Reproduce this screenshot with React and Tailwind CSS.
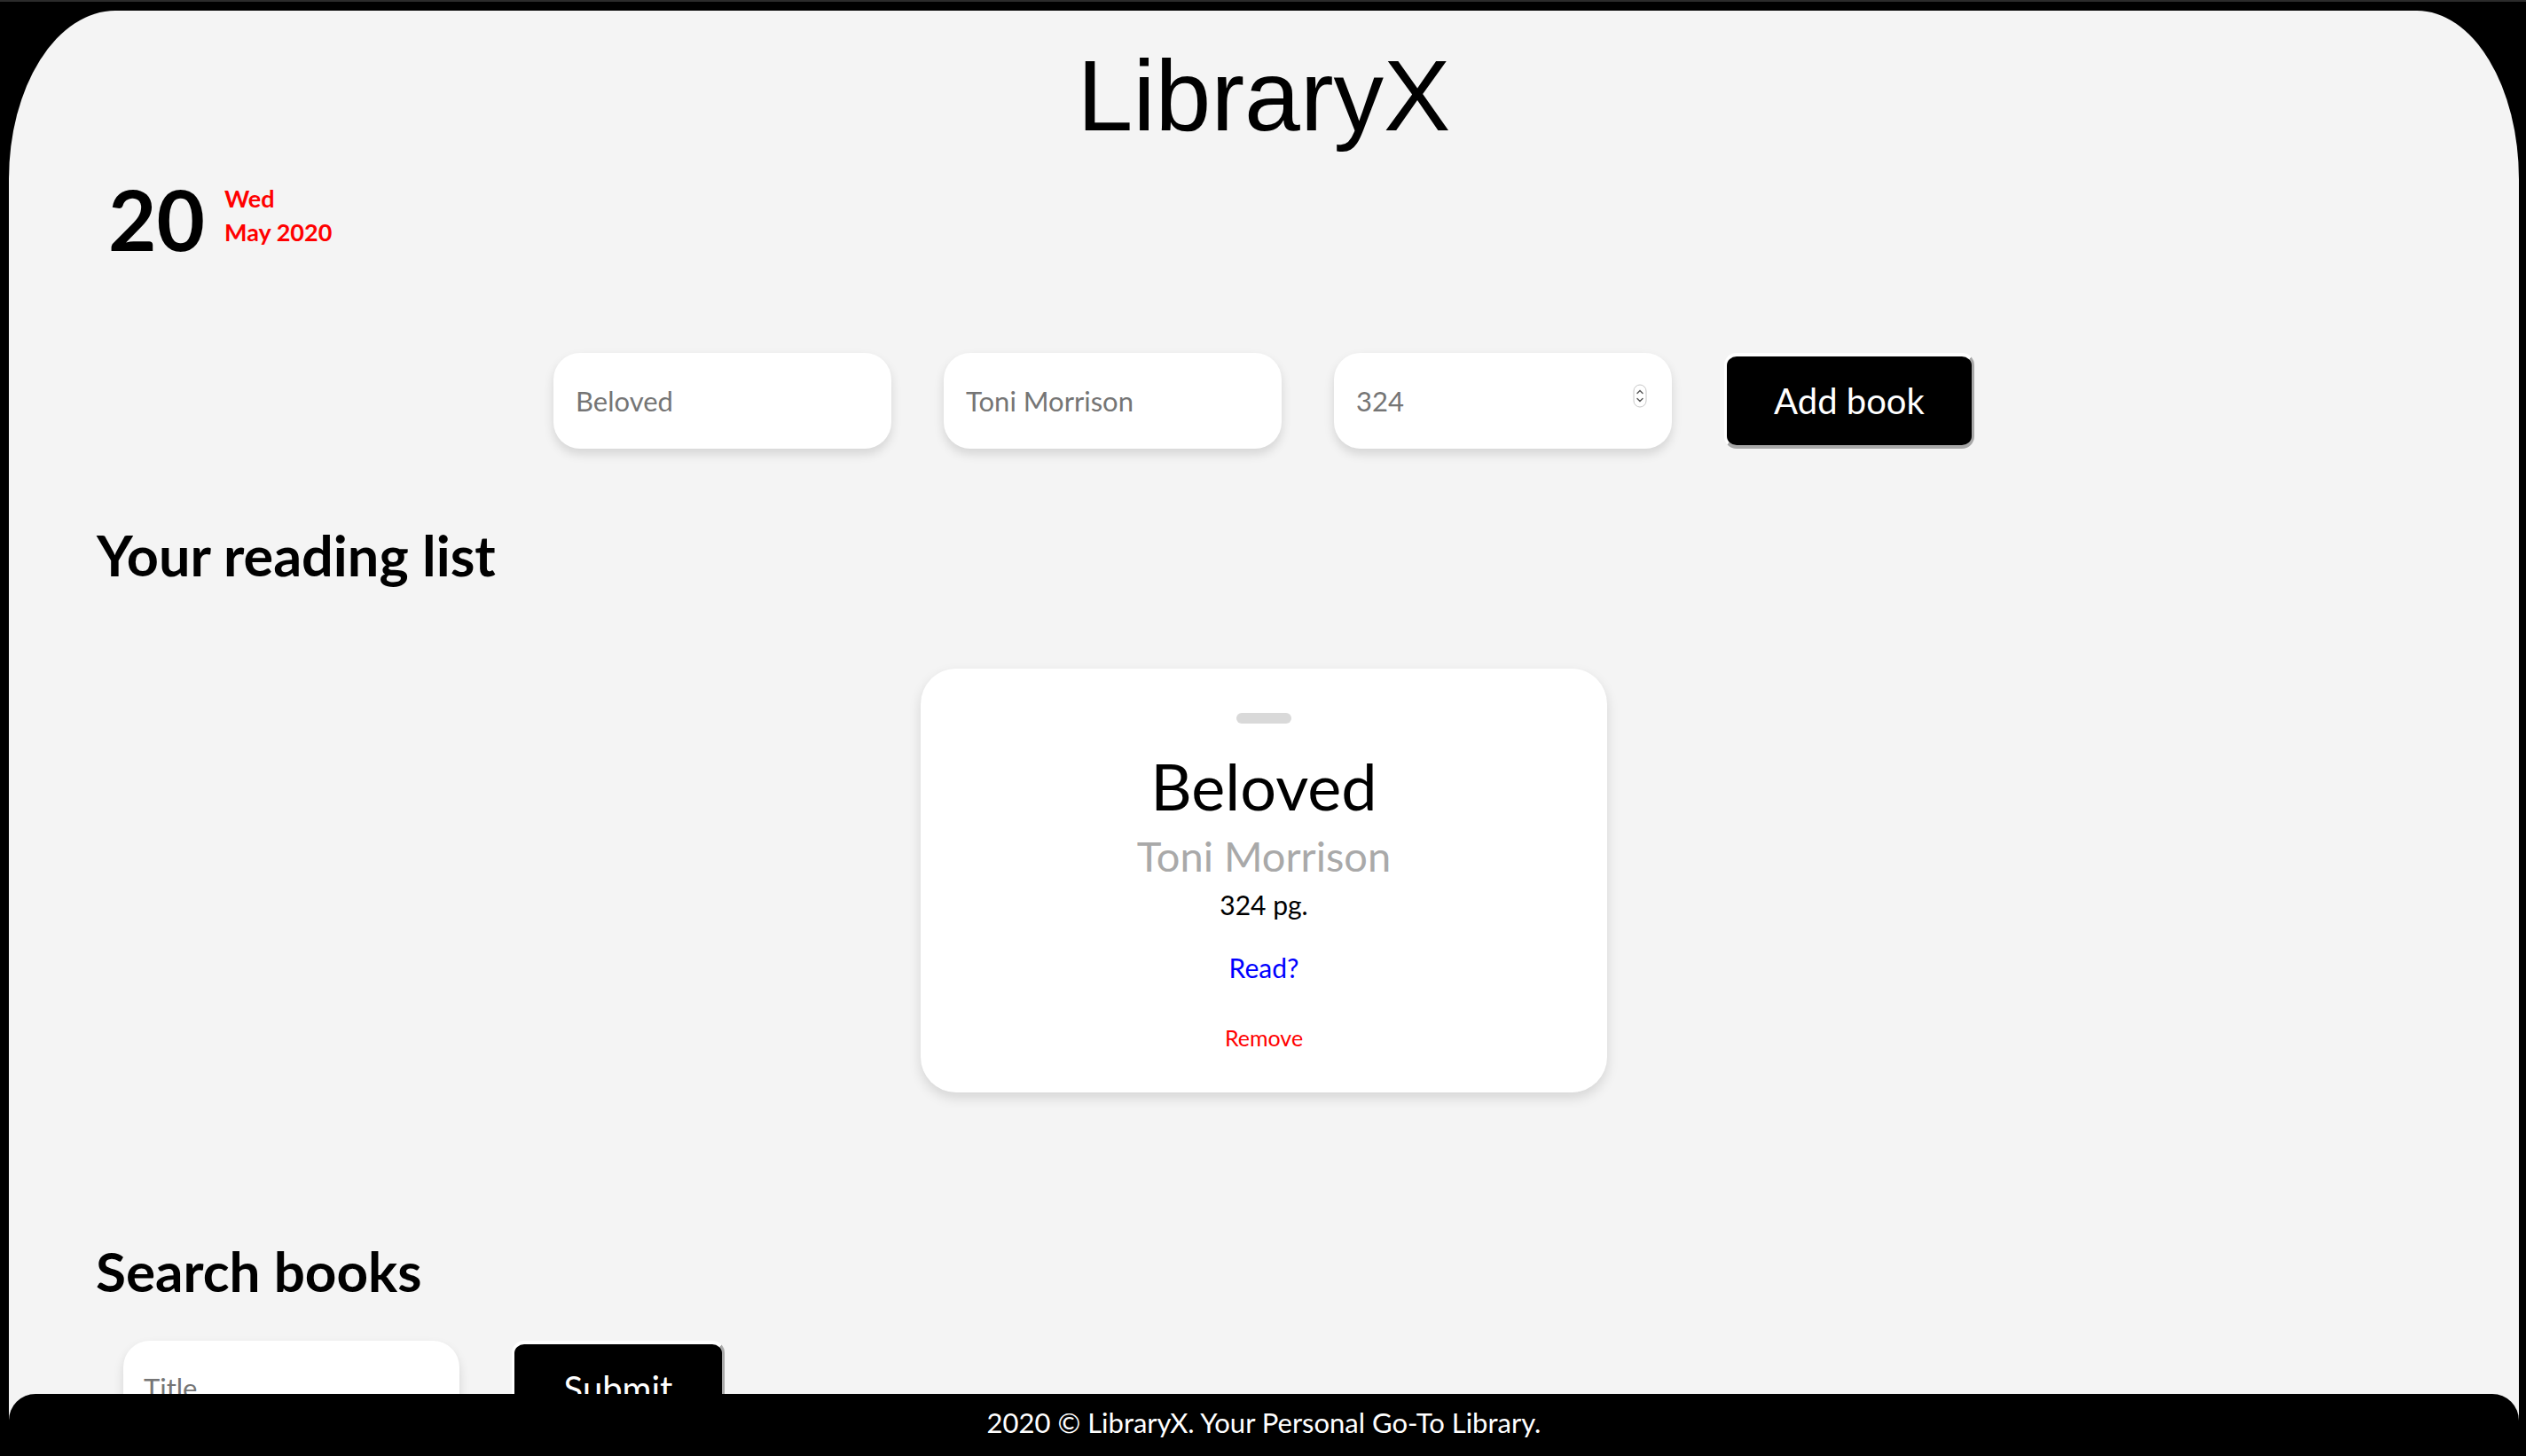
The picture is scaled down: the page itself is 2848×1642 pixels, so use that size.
import React from 'react';

const FONT = { fontFamily: 'Lato, "Noto Sans", sans-serif' };

// little up/down arrows that Safari draws in a number field
const Spinner = () => (
  <svg
    className="absolute right-[28px] top-[35px] pointer-events-none"
    width="16"
    height="27"
    viewBox="0 0 16 27"
  >
    <rect x="1" y="1" width="14" height="25" rx="7" fill="#fff" stroke="#c8c8c8" strokeWidth="1" />
    <path d="M5 10.5 L8 7.5 L11 10.5" fill="none" stroke="#555" strokeWidth="1.4" strokeLinecap="round" />
    <path d="M5 16.5 L8 19.5 L11 16.5" fill="none" stroke="#555" strokeWidth="1.4" strokeLinecap="round" />
  </svg>
);

const Field = ({ value, width = 'w-[381px]', children }) => (
  <div className={`relative ${width} h-[108px]`}>
    <input
      defaultValue={value}
      className="w-full h-full rounded-[30px] bg-white pl-[25px] text-[31px] text-[#757575] outline-none shadow-[0_6px_12px_rgba(0,0,0,0.13)]"
      style={FONT}
    />
    {children}
  </div>
);

const BlackButton = ({ label, width }) => (
  <button
    className={`${width} h-[108px] rounded-[14px] bg-black text-white text-[40px] border-[3px] border-t-[4px] border-b-[4px] border-t-white border-l-white border-r-[#a8a8a8] border-b-[#a8a8a8]`}
    style={FONT}
  >
    {label}
  </button>
);

const BookCard = ({ title, author, pages }) => (
  <div className="w-[774px] rounded-[40px] bg-white shadow-[0_6px_14px_rgba(0,0,0,0.13)] flex flex-col items-center pt-[50px] pb-[49px]">
    <div className="w-[62px] h-[12px] rounded-full bg-[#d9d9d9]" />
    <div className="mt-[34px] text-[72px] leading-[72px] text-black">{title}</div>
    <div className="mt-[19px] text-[47px] leading-[48px] text-[#a9a9a9]">{author}</div>
    <div className="mt-[16px] text-[30px] leading-[30px] text-black">{pages} pg.</div>
    <div className="mt-[41px] text-[30px] leading-[30px] text-[#0000ff] cursor-pointer">Read?</div>
    <div className="mt-[52px] text-[25px] leading-[25px] text-[#ff0000] cursor-pointer">Remove</div>
  </div>
);

export default function App() {
  return (
    <div className="min-h-screen flex flex-col bg-black border-t-2 border-[#2b2b2b] pt-[10px] pl-[10px] pr-[8px]" style={FONT}>
      <main className="flex-1 bg-[#f4f4f4] rounded-tl-[120px_190px] rounded-tr-[115px_190px] pb-[200px]">
        {/* header */}
        <h1
          className="mt-[40px] text-center text-[113px] leading-[113px] text-black"
          style={{ fontFamily: '"Liberation Sans", Arial, sans-serif' }}
        >
          LibraryX
        </h1>

        {/* date */}
        <div className="mt-[34px] ml-[112px] flex items-start">
          <div className="text-[94px] leading-[96px] font-bold text-black">20</div>
          <div className="ml-[22px] mt-[6px] text-[27px] leading-[38px] font-bold text-[#ff0000]">
            <div>Wed</div>
            <div>May 2020</div>
          </div>
        </div>

        {/* add book form */}
        <div className="mt-[103px] flex justify-center gap-[59px]">
          <Field value="Beloved" />
          <Field value="Toni Morrison" />
          <Field value="324">
            <Spinner />
          </Field>
          <BlackButton label="Add book" width="w-[282px]" />
        </div>

        {/* reading list */}
        <h2 className="mt-[88px] ml-[99px] text-[63px] leading-[64px] font-bold text-black">Your reading list</h2>
        <div className="mt-[96px] flex justify-center">
          <BookCard title="Beloved" author="Toni Morrison" pages={324} />
        </div>

        {/* search */}
        <h2 className="mt-[169px] ml-[98px] text-[62px] leading-[64px] font-bold text-black">Search books</h2>
        <div className="mt-[47px] ml-[129px] flex gap-[59px]">
          <Field value="" width="w-[379px]">
            <span className="absolute left-[23px] top-[38px] text-[31px] leading-[30px] text-[#757575] pointer-events-none">
              Title
            </span>
          </Field>
          <BlackButton label="Submit" width="w-[240px]" />
        </div>
      </main>

      {/* footer */}
      <footer className="fixed bottom-0 left-[10px] right-[8px] h-[70px] bg-black rounded-t-[30px] flex justify-center pt-[17px]">
        <span className="text-[31px] leading-[30px] text-white">2020 © LibraryX. Your Personal Go-To Library.</span>
      </footer>
    </div>
  );
}
